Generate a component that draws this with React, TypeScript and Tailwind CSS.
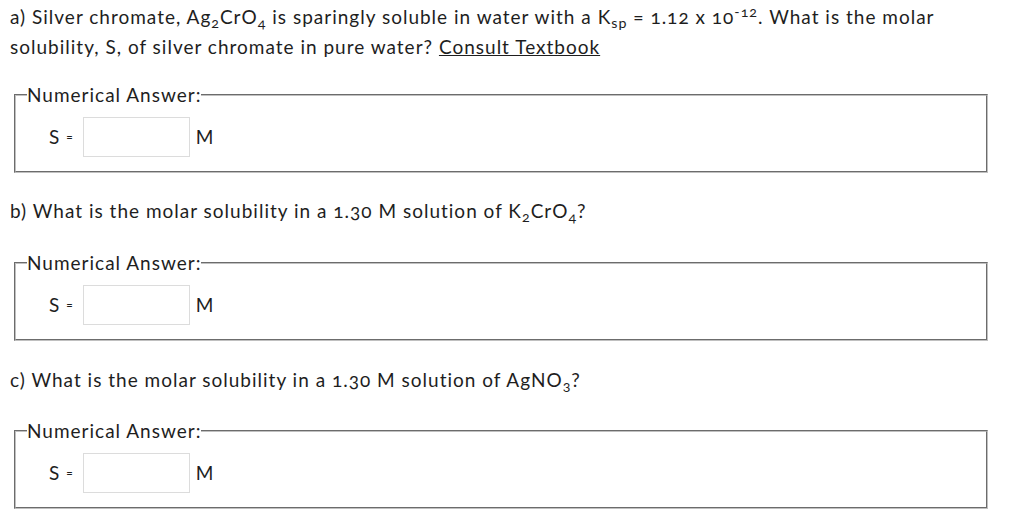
import React from "react";

function Answer() {
  return (
    <fieldset className="ml-[4px] border-2 border-[#c0c0c0] [border-style:groove] pl-[11px] pr-3 pb-[14px]">
      <legend className="leading-[22px]">Numerical Answer:</legend>
      <div className="flex items-center pl-[22px] pt-[11px]">
        <span>S</span>
        <span className="ml-[6px] text-[12px]">=</span>
        <input
          type="text"
          className="ml-[9px] h-[40px] w-[107px] border border-[#dcdcdc] bg-white outline-none"
        />
        <span className="ml-[6px]">M</span>
      </div>
    </fieldset>
  );
}

export default function App() {
  return (
    <div className="min-h-screen bg-white pl-[10px] pr-[36px] text-[19px] tracking-[1px] text-[#1e1e1e] oldstyle-nums font-['Lato',sans-serif]">
      {/* part a */}
      <p className="pt-[2px] leading-[30px]">
        a) Silver chromate, Ag<sub>2</sub>CrO<sub>4</sub> is sparingly soluble in water with a K
        <sub>sp</sub> = 1.12 x 10<sup>-12</sup>. What is the molar
        <br />
        solubility, S, of silver chromate in pure water?{" "}
        <span className="underline">Consult Textbook</span>
      </p>
      <div className="mt-[22px]">
        <Answer />
      </div>

      {/* part b */}
      <p className="mt-[23px] leading-[30px]">
        b) What is the molar solubility in a 1.30 M solution of K<sub>2</sub>CrO<sub>4</sub>?
      </p>
      <div className="mt-[26px]">
        <Answer />
      </div>

      {/* part c */}
      <p className="mt-[24px] leading-[30px]">
        c) What is the molar solubility in a 1.30 M solution of AgNO<sub>3</sub>?
      </p>
      <div className="mt-[25px]">
        <Answer />
      </div>
    </div>
  );
}
